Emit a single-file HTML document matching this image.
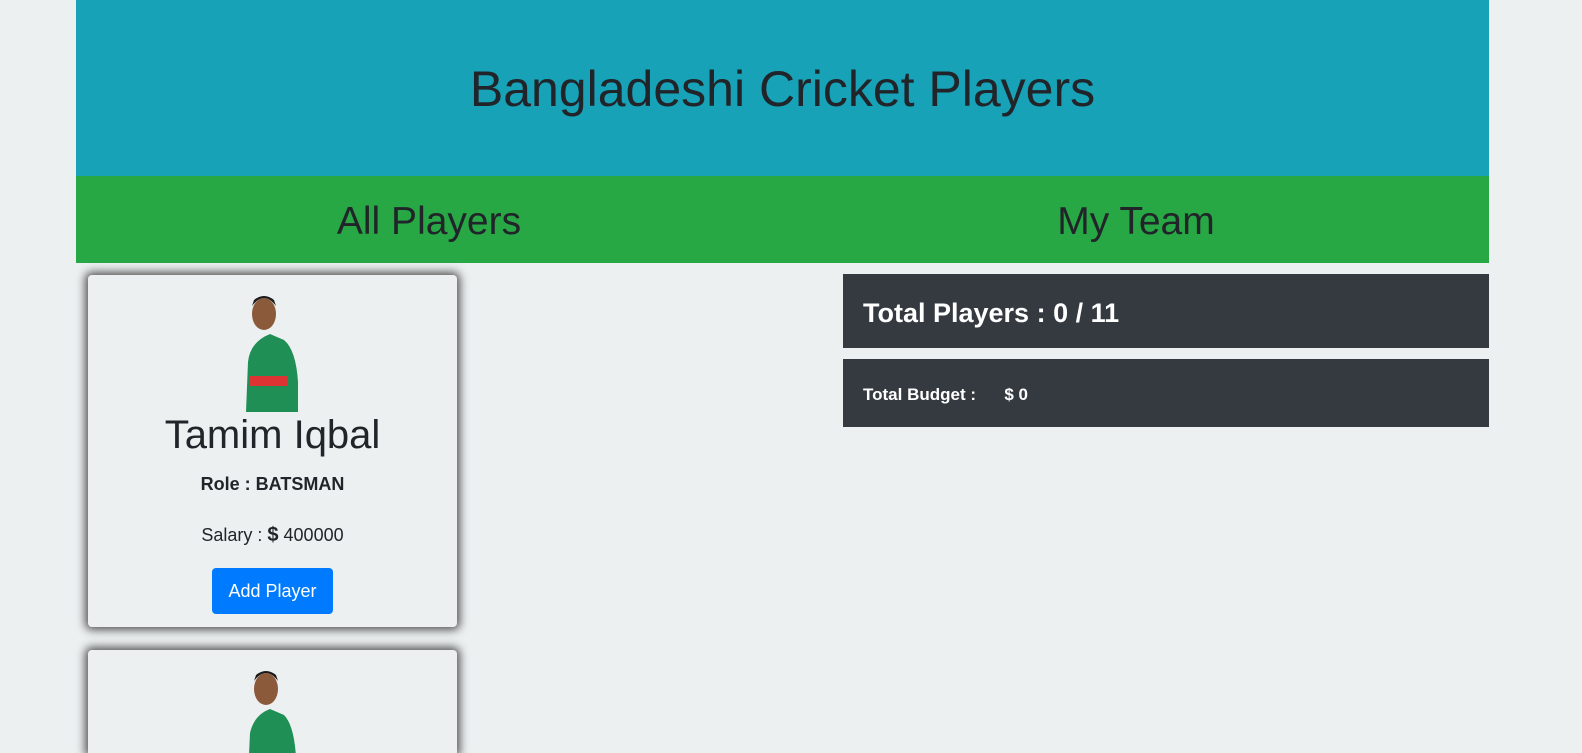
<!DOCTYPE html>
<html style="overflow:hidden;height:753px"><head><style>
body{margin:0;background:#ecf0f1;font-family:"Liberation Sans",sans-serif;color:#212529;overflow:hidden;height:753px;position:relative}
.c{position:absolute;left:76px;width:1413px}
.hd{top:0;height:176px;background:#17a2b8;text-align:center;font-size:50px;line-height:178px}
.gr{top:176px;height:87px;background:#28a745;font-size:39px}
.gr span{position:absolute;top:0;line-height:92px;transform:translateX(-50%)}
.card{position:absolute;left:88px;width:369px;background:#ecf0f1;border-radius:4px;box-shadow:0 0 9px 3px #555;text-align:center;overflow:hidden}
.dp{position:absolute;left:843px;width:646px;background:#343a40;color:#fff;font-weight:bold}
.btn{display:inline-block;background:#007bff;color:#fff;border-radius:4px;font-size:18px;padding:0 16px;height:46px;line-height:46px}
</style></head><body>
<div class="c hd">Bangladeshi Cricket Players</div>
<div class="c gr"><span style="left:353px">All Players</span><span style="left:1060px">My Team</span></div>
<div class="card" style="top:275px;height:352px">
<svg width="60" height="120" style="position:absolute;left:152px;top:17px" viewBox="0 0 60 120"><path d="M6 120 L8 70 Q10 50 30 42 L44 48 Q56 58 58 90 L58 120Z" fill="#1f8f55"/><rect x="10" y="84" width="38" height="10" fill="#d33"/><ellipse cx="24" cy="22" rx="12" ry="16" fill="#8a5a3b"/><path d="M12 14 Q24 -2 36 14 L34 8 Q24 0 14 8Z" fill="#1a1a1a"/></svg>
<div style="position:absolute;top:138px;width:100%;font-size:40px">Tamim Iqbal</div>
<div style="position:absolute;top:199px;width:100%;font-size:18px;font-weight:bold">Role : BATSMAN</div>
<div style="position:absolute;top:249px;width:100%;font-size:18px">Salary : <b style="font-size:20px">$</b> 400000</div>
<div style="position:absolute;top:293px;width:100%"><span class="btn">Add Player</span></div>
</div>
<div class="card" style="top:650px;height:103px;border-radius:4px 4px 0 0">
<svg width="60" height="110" style="position:absolute;left:152px;top:17px" viewBox="0 0 60 110"><path d="M8 110 L10 66 Q14 48 30 42 L44 48 Q54 58 56 90 L56 110Z" fill="#1f8f55"/><ellipse cx="26" cy="22" rx="12" ry="16" fill="#8a5a3b"/><path d="M14 14 Q26 -2 38 14 L36 8 Q26 0 16 8Z" fill="#1a1a1a"/></svg>
</div>
<div class="dp" style="top:274px;height:74px;font-size:27px;line-height:78px;padding-left:20px;box-sizing:border-box">Total Players : 0 / 11</div>
<div class="dp" style="top:359px;height:68px;font-size:17px;line-height:72px;padding-left:20px;box-sizing:border-box">Total Budget :&nbsp;&nbsp;&nbsp;&nbsp;&nbsp; $ 0</div>
</body></html>
